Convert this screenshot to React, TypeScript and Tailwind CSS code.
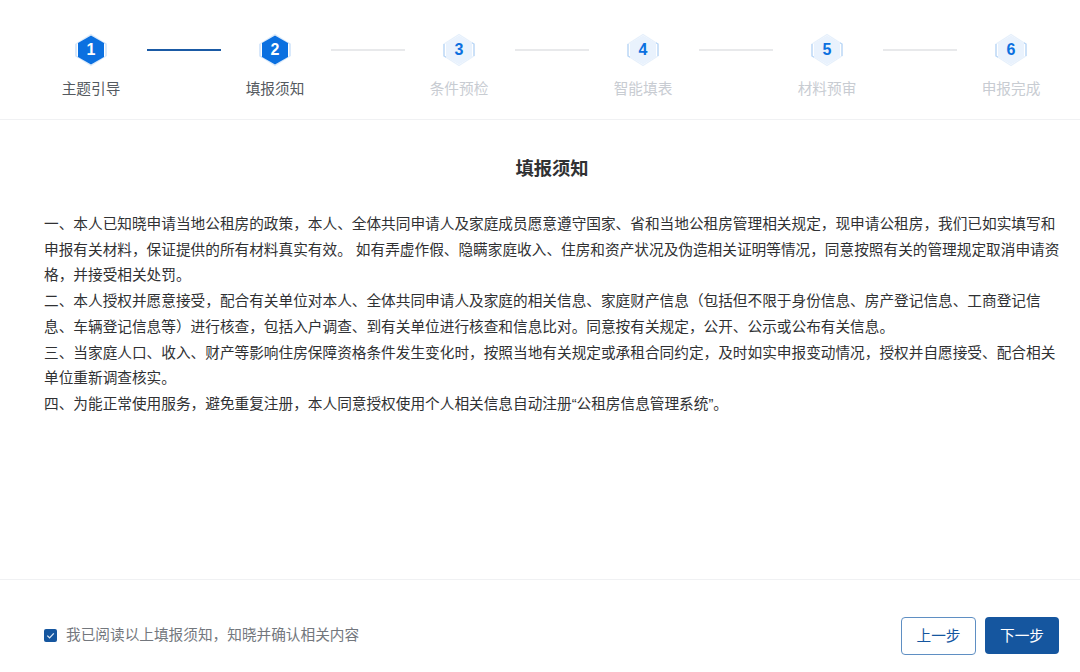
const font = '[font-family:"Liberation_Sans","Noto_Sans_CJK_SC",sans-serif]';

const steps = [
  { n: 1, label: '主题引导', done: true },
  { n: 2, label: '填报须知', done: true },
  { n: 3, label: '条件预检', done: false },
  { n: 4, label: '智能填表', done: false },
  { n: 5, label: '材料预审', done: false },
  { n: 6, label: '申报完成', done: false },
];

const paragraphs = [
  '一、本人已知晓申请当地公租房的政策，本人、全体共同申请人及家庭成员愿意遵守国家、省和当地公租房管理相关规定，现申请公租房，我们已如实填写和申报有关材料，保证提供的所有材料真实有效。 如有弄虚作假、隐瞒家庭收入、住房和资产状况及伪造相关证明等情况，同意按照有关的管理规定取消申请资格，并接受相关处罚。',
  '二、本人授权并愿意接受，配合有关单位对本人、全体共同申请人及家庭的相关信息、家庭财产信息（包括但不限于身份信息、房产登记信息、工商登记信息、车辆登记信息等）进行核查，包括入户调查、到有关单位进行核查和信息比对。同意按有关规定，公开、公示或公布有关信息。',
  '三、当家庭人口、收入、财产等影响住房保障资格条件发生变化时，按照当地有关规定或承租合同约定，及时如实申报变动情况，授权并自愿接受、配合相关单位重新调查核实。',
  '四、为能正常使用服务，避免重复注册，本人同意授权使用个人相关信息自动注册“公租房信息管理系统”。',
];

function Hexagon({ n, done }: { n: number; done: boolean }) {
  return (
    <div className="relative h-[36px] w-[36px]">
      <svg viewBox="0 0 36 36" className="h-[36px] w-[36px]">
        {/* outer broken ring */}
        <path
          d="M3 12 L18 2.5 L33 12 V24 L18 33.5 L3 24 Z"
          fill="none"
          stroke={done ? '#dcebfb' : '#e6f0fb'}
          strokeWidth="1.2"
        />
        <path d="M3 12 V24 L5 25.3" fill="none" stroke={done ? '#cfe3fa' : '#b9d6f6'} strokeWidth="1.3" />
        <path d="M33 24 V12 L31 10.7" fill="none" stroke={done ? '#cfe3fa' : '#b9d6f6'} strokeWidth="1.3" />
        <path
          d="M18 3.5 L31 11 V25 L18 32.5 L5 25 V11 Z"
          fill={done ? '#0b70e0' : '#e9f2fd'}
        />
      </svg>
      <span
        className={`absolute inset-0 flex items-center justify-center text-[16px] font-bold ${font} ${
          done ? 'text-white' : 'text-[#0b70e0]'
        }`}
      >
        {n}
      </span>
    </div>
  );
}

export default function App() {
  return (
    <div className={`flex h-[672px] w-[1080px] flex-col bg-white ${font}`}>
      {/* Steps */}
      <div className="flex h-[120px] shrink-0 items-start border-b border-[#f0f1f3] px-[61px] pt-[32px]">
        {steps.map((step, i) => (
          <div key={step.n} className="flex items-start">
            <div className="flex w-[60px] flex-col items-center">
              <Hexagon n={step.n} done={step.done} />
              <span
                className={`mt-[10px] whitespace-nowrap text-[14.67px] leading-[22px] ${
                  step.done ? 'text-[#555a60]' : 'text-[#c8ccd2]'
                }`}
              >
                {step.label}
              </span>
            </div>
            {i < steps.length - 1 && (
              <div
                className={`mx-[25px] mt-[17px] h-[2px] w-[74px] translate-x-[1px] ${
                  step.n === 1 ? 'bg-[#1a5aa5]' : 'bg-[#e8e9eb]'
                }`}
              />
            )}
          </div>
        ))}
      </div>

      {/* Notice */}
      <div className="flex-1 pl-[44px] pr-[20px]">
        <h1 className="mt-[36px] text-center text-[18.3px] font-bold leading-[26px] text-[#303133]">填报须知</h1>
        <div className="mt-[30px] text-[14.67px] leading-[25.7px] text-[#303133]">
          {paragraphs.map((p) => (
            <p key={p}>{p}</p>
          ))}
        </div>
      </div>

      {/* Footer */}
      <div className="flex h-[93px] shrink-0 items-start justify-between border-t border-[#f0f1f3] pl-[44px] pr-[21px] pt-[37px]">
        <label className="mt-[7px] flex items-center gap-[9px]">
          <span className="flex h-[13px] w-[13px] items-center justify-center rounded-[2px] bg-[#15569f]">
            <svg viewBox="0 0 13 13" className="h-[13px] w-[13px]">
              <path d="M3.3 6.6 L5.6 8.9 L9.8 4.4" fill="none" stroke="#dfe9f5" strokeWidth="1.3" />
            </svg>
          </span>
          <span className="text-[14.67px] leading-[22px] text-[#73777d]">我已阅读以上填报须知，知晓并确认相关内容</span>
        </label>
        <div className="flex gap-[9px]">
          <button className="h-[38px] w-[75px] rounded-[4px] border border-[#5f8fc3] bg-white text-[14.67px] text-[#15569f]">
            上一步
          </button>
          <button className="h-[37px] w-[74px] rounded-[4px] bg-[#15569f] text-[14.67px] text-white">下一步</button>
        </div>
      </div>
    </div>
  );
}
